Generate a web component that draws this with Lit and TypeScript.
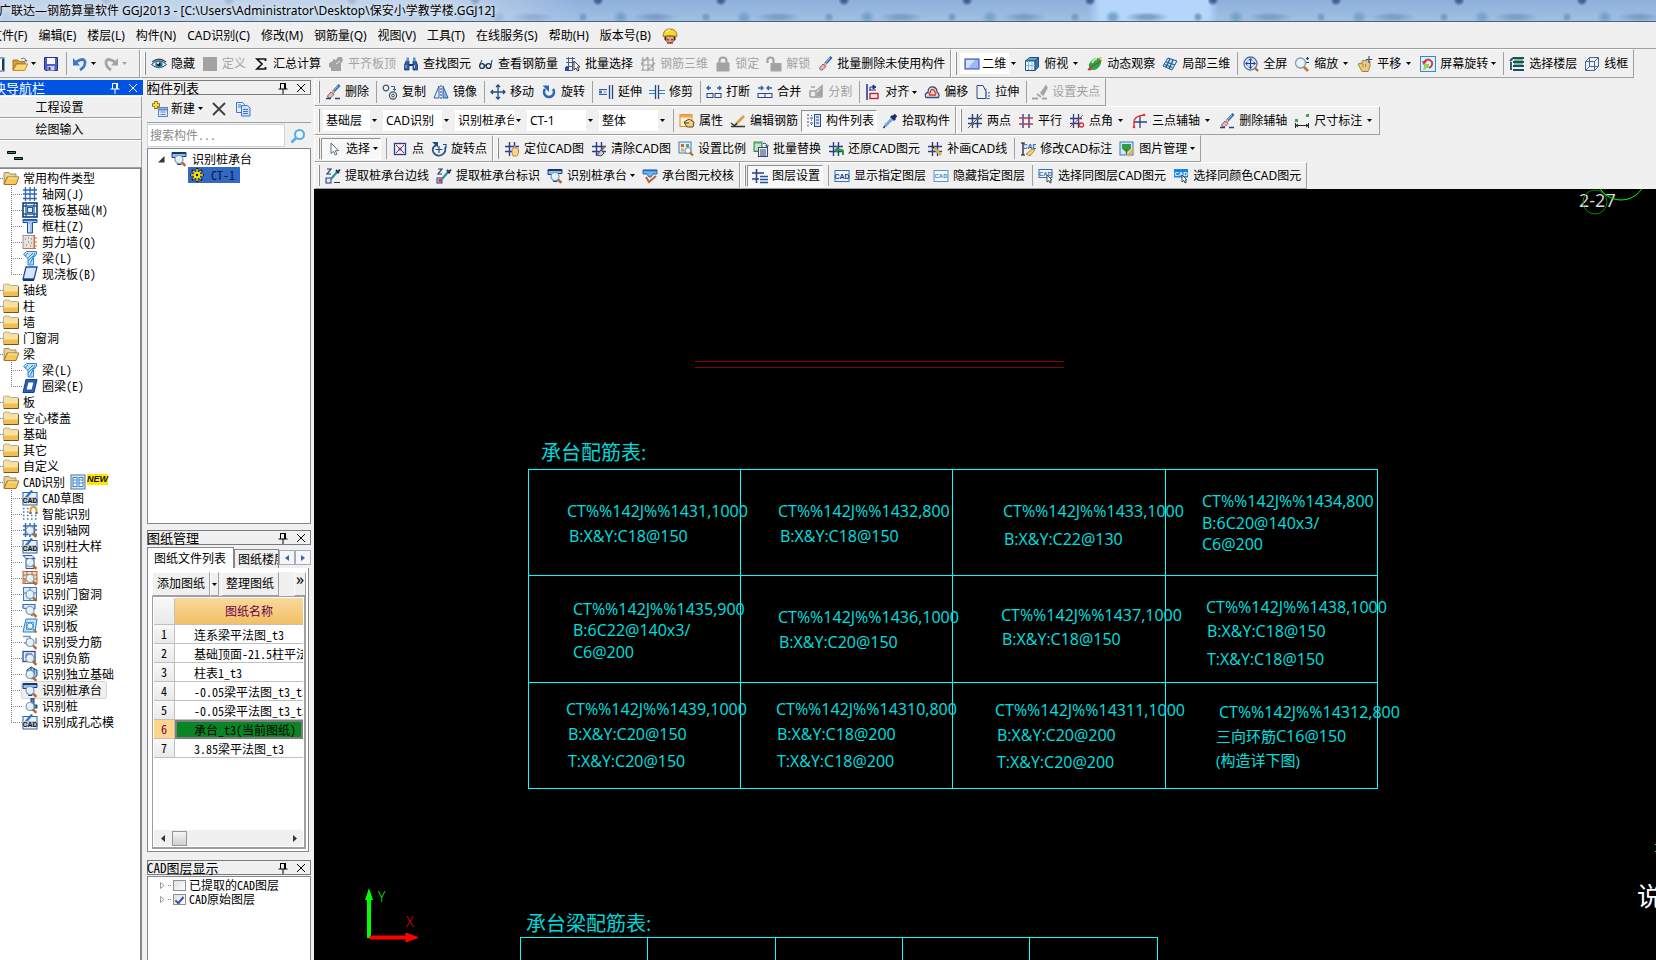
import { LitElement, html, svg, css, nothing, TemplateResult } from "lit";
import { customElement, property } from "lit/decorators.js";
import { classMap } from "lit/directives/class-map.js";

/* ---------- icon artwork, 16 x 16 ---------- */

const BLUE = "#3a76cf";
const GREY = "#a3a3a3";

const lens = svg`<circle cx="8" cy="8.5" r="4" fill="#dff1fc" stroke="#8797a8" stroke-width="1.2"/><path d="M6 7.5a2.4 2.4 0 0 1 2.4-1.6" stroke="#fff" fill="none"/><path d="M11.2 11.6l3.2 3.2" stroke="#b56b23" stroke-width="2.6"/>`;
const hash = svg`<path d="M5.5 1v14M10.5 1v14M1 5.5h14M1 10.5h14" stroke="#2a3f8c" stroke-width="1.4" fill="none"/>`;
const brush = svg`<path d="M14.5 1L8 8" stroke="#2d62b5" stroke-width="2.6"/><path d="M13 2L9 6.500" stroke="#9fd0f5" stroke-width="1"/><path d="M9.500 6L6 8.500l2.500 2.500z" fill="#f3c04b"/><path d="M6 8L2.500 12c0 2 2.500 2.500 3.500 1.500L9 10.500z" fill="#e9b9c4" stroke="#7a3b55" stroke-width=".8"/>`;
const tile = (inner: TemplateResult) => svg`<rect x="1.500" y="1.500" width="13" height="13" fill="#d9ebfb" stroke="${BLUE}"/>${inner}`;
const cad = svg`<text x="8" y="11" font-size="7" font-weight="700" text-anchor="middle" font-family="Liberation Sans, sans-serif" fill="#15407f">CAD</text>`;
const cadSheet = svg`<rect x="1" y="2.500" width="14" height="12.500" fill="#e6f1fb" stroke="#2f62a8"/><path d="M3 7L9 0l2 1-5 6z" fill="#2f6fd0"/><rect x="1" y="7" width="14" height="6" fill="#b8c4d0"/><text x="8" y="13" font-size="7" font-weight="700" text-anchor="middle" font-family="Liberation Sans, sans-serif" fill="#111">CAD</text>`;
const cap = svg`<path d="M1 1.500h14v4h-4l-1 8H6.500L5 6.500H1z" fill="#8fbdec" stroke="#12407f"/><path d="M1 2h14" stroke="#0e3b78" stroke-width="2"/>`;
const pick = (end: TemplateResult) => svg`<rect x="1" y="10" width="5" height="5" fill="#e8e8f4" stroke="#23356f"/><path d="M2 1h4L2 6h4" stroke="#23356f" stroke-width="1.200" fill="none"/><path d="M6 11L12 4" stroke="#2f8fa8" stroke-width="2.200"/><path d="M11 2l3 3M12 5l3-3.500" stroke="#1c2f60" stroke-width="1.800"/>${end}`;

const ICONS: Record<string, TemplateResult> = {
  newdoc: svg`<rect x="2" y="2" width="13" height="13" fill="#fff" stroke="#27508a"/><path d="M14 3v11" stroke="#123a5c" stroke-width="2"/>`,
  open: svg`<path d="M1 4h5l1.500 1.500H13V8H4l-3 6z" fill="#d9a235" stroke="#8f6516" stroke-width=".8"/><path d="M4.500 8H16l-3.500 6.500H1z" fill="#fbd774" stroke="#a8781d" stroke-width=".8"/><path d="M9 3q3-2.500 5 1" stroke="#4d6fae" fill="none"/><path d="M12.500 4h3l-1 2z" fill="#4d6fae"/>`,
  save: svg`<path d="M1.500 1.500h13v13h-12l-1-1z" fill="#4a5fc9" stroke="#27348f"/><rect x="4" y="2" width="8" height="6" fill="#f4f7ff"/><rect x="4.500" y="10" width="7" height="4.500" fill="#cdd5f3"/><rect x="5.500" y="11" width="2" height="3" fill="#27348f"/>`,
  undo: svg`<path d="M4 6q8-5 9 0 .5 4.500-5 8" stroke="#3c78cf" stroke-width="2.800" fill="none"/><path d="M1 2v7.500h7z" fill="#3c78cf"/>`,
  redo: svg`<path d="M12 6q-8-5-9 0-.5 4.500 5 8" stroke="${GREY}" stroke-width="2.800" fill="none"/><path d="M15 2v7.500H8z" fill="${GREY}"/>`,
  eye: svg`<path d="M.5 8.500Q8 1 15.500 8.500 8 15 .5 8.500z" fill="#e9f1f7" stroke="#2d3e52"/><path d="M1 6Q8 .500 15 6" stroke="#35506b" stroke-width="1.400" fill="none"/><circle cx="8" cy="8.500" r="3.800" fill="#3f83a9"/><circle cx="8" cy="8.500" r="1.800" fill="#0d1c2b"/><circle cx="7" cy="7" r="1" fill="#fff"/>`,
  block: svg`<rect x="1" y="1" width="14" height="14" fill="${GREY}"/>`,
  sigma: svg`<path d="M12.500 5V3H4l5 5-5 5h8.500v-2" stroke="#111" stroke-width="1.700" fill="none"/>`,
  flush: svg`<path d="M1 7l4-2V3l3 1 2-3h4l1 4-2 2v8H3v-3l-2-1z" fill="${GREY}"/><path d="M8 8l4-3" stroke="#eee"/>`,
  find: svg`<path d="M3 5h3v9H1.500V9zM10 5h3l1.500 4v5H10z" fill="#2e5ea8" stroke="#173868" stroke-width=".8"/><rect x="3.500" y="1.500" width="2.500" height="4" fill="#5c8ed4"/><rect x="10" y="1.500" width="2.500" height="4" fill="#5c8ed4"/><path d="M6 8h4v2H6z" fill="#173868"/><path d="M3 9v3M11.500 9v3" stroke="#a9c8f1"/>`,
  glasses: svg`<circle cx="4" cy="10" r="2.400" fill="none" stroke="#1c3857" stroke-width="1.400"/><circle cx="10.500" cy="10" r="2.400" fill="none" stroke="#1c3857" stroke-width="1.400"/><path d="M6.200 9.500q1-1 2 0M2 8l2-4M13 9l1-5" stroke="#1c3857" fill="none"/>`,
  batchsel: svg`<path d="M1 2.500h9M1 6.500h8M1 10.500h7M1 14.500h6M3.500 1v14M7.500 1v14" stroke="#4c5d86" fill="none"/><rect x="0" y="11" width="4" height="4" fill="#2a4fa8"/><path d="M9 5v9l2-2 1.500 3 1.500-.8L12.500 11H15z" fill="#fff" stroke="#334"/>`,
  rebar3d: svg`<path d="M1 4h13M1 9h13M1 14h13M3 1v14M8 1v14M13 1v14M1 8l7-7M7 15l8-8" stroke="${GREY}" stroke-width="1.200" fill="none"/>`,
  lock: svg`<path d="M4.500 7V4.500q0-3 3.500-3t3.500 3V7" stroke="${GREY}" stroke-width="2.200" fill="none"/><rect x="1.500" y="6.500" width="13" height="9" fill="${GREY}"/>`,
  unlock: svg`<path d="M1.500 7V4.500q0-3 3-3t3 3V8" stroke="${GREY}" stroke-width="2.200" fill="none"/><rect x="4.500" y="7" width="11" height="8.500" fill="${GREY}"/>`,
  brush,
  erase: svg`${brush}<path d="M1 14.500h5M10 14.500h5" stroke="#23457f" stroke-width="1.600"/>`,
  rect2d: svg`<rect x="1" y="3" width="14" height="10" fill="#9db9f3" stroke="#2749b0"/><path d="M2 4h9l-7 8H2z" fill="#d6e2fc"/>`,
  cube: svg`<path d="M1.500 5l4-3.500h9l-3.500 3.500z" fill="#5aa3dd" stroke="#1d4f80"/><path d="M1.500 5h9.500v9.500H1.500z" fill="#eef6fd" stroke="#1d4f80"/><path d="M11 5l3.500-3.500v9.500L11 14.500z" fill="#3376b4" stroke="#1d4f80"/><path d="M4.500 5v9M8 5v9M1.500 9.500H11" stroke="#8ab3d8" fill="none"/>`,
  orbit: svg`<ellipse cx="8" cy="8" rx="7" ry="5" transform="rotate(-45 8 8)" fill="#2ba34b"/><path d="M5 7q2-4 5-4" stroke="#b7f0b0" stroke-width="2" fill="none"/><path d="M1 14Q4 10 9 8t5-4" stroke="#8a5323" stroke-width="1.300" fill="none"/><path d="M12 1l3 0-1 4z" fill="#e6ce2e"/><circle cx="3" cy="13" r="1.500" fill="#d33"/>`,
  local3d: svg`<path d="M1 10l5-8 9 3-5 9z" fill="#cfe6f8" stroke="#24598f"/><path d="M4 6l9 3M2.500 8.500l8 3M8 3L4 11M11 4l-4 9" stroke="#24598f" stroke-width="1.300" fill="none"/>`,
  full: svg`<circle cx="7.500" cy="7.500" r="6.500" fill="#cfe2f7" stroke="#5b6f9c" stroke-width="1.300"/><path d="M7.500 3v9M3 7.500h9M6 4.500l1.500-2 1.500 2M6 10.500l1.500 2 1.500-2M4.500 6l-2 1.500 2 1.500M10.500 6l2 1.500-2 1.500" stroke="#1f3f86" fill="none"/><path d="M12 12l3 3" stroke="#b56b23" stroke-width="2.400"/>`,
  zoom: svg`<circle cx="6.500" cy="7" r="5" fill="#e6f3fd" stroke="#8b99ab" stroke-width="1.300"/><path d="M10 11l4 4" stroke="#c27a2b" stroke-width="2.600"/><path d="M13.500 1v3M12 2.500h3M12 6.500h3" stroke="#1f3f86" stroke-width="1.200"/>`,
  hand: svg`<path d="M1 8l2-1 2 1V5l2-1 1 1 2-.5 1 1 2 0v5l-2 5H5z" fill="#e9c886" stroke="#9c7635" stroke-width=".9"/><path d="M12 0v7M8.800 3.500h6.500" stroke="#344a70" stroke-width="1.100"/><path d="M6 8v3M8.500 8v3" stroke="#b68c45"/>`,
  rotscreen: svg`<rect x=".5" y=".5" width="15" height="15" fill="#d8f0fb" stroke="#2f8fc4"/><path d="M4 6q4-5 8 0 1 4-3 6" stroke="#e0322e" stroke-width="1.800" fill="none"/><path d="M2 5l5 .5L3.500 9z" fill="#e0322e"/><rect x="4" y="8" width="5" height="4" fill="#8fcf6c"/><rect x="3" y="12" width="3" height="2" fill="#f2c531"/>`,
  floors: svg`<path d="M4 2h11M1 5l3-3M4 6h11M4 10h11M4 14h11M2 6v8" stroke="#1c4f63" stroke-width="1.800" fill="none"/><path d="M5 4h9M5 8h9" stroke="#55b46a" stroke-width="1.500"/>`,
  wire: svg`<path d="M1.500 5.500h9v9h-9zM5.500 1.500h9v9h-9zM1.500 5.500l4-4M10.500 5.500l4-4M10.500 14.500l4-4M1.500 14.500l4-4" stroke="#4a6494" fill="none"/>`,

  copy: svg`<circle cx="4" cy="4" r="2.800" fill="none" stroke="#456" stroke-width="1.200"/><circle cx="11" cy="11.500" r="3.600" fill="#e4e8f0" stroke="#456" stroke-width="1.200"/><circle cx="11" cy="11.500" r="1.400" fill="none" stroke="#456"/><path d="M9 2.500h3.500V6M11 5l1.500 1.500L14 5" stroke="#2b5fae" fill="none"/>`,
  mirror: svg`<path d="M6 2v12H1z" fill="#e2edfa" stroke="#2b5fae"/><path d="M10 2v12h5z" fill="#8cb6ea" stroke="#2b5fae"/><path d="M8 1v14" stroke="#223a66" stroke-dasharray="2 1"/>`,
  move: svg`<path d="M8 1v14M1 8h14M6 3l2-2 2 2M6 13l2 2 2-2M3 6L1 8l2 2M13 6l2 2-2 2" stroke="#234a86" stroke-width="1.300" fill="none"/>`,
  rotate: svg`<path d="M4 5A5 5 0 1 0 12 5" stroke="#2f64b8" stroke-width="2.600" fill="none"/><path d="M1.500 1.500H8V8z" fill="#2f64b8"/>`,
  extend: svg`<path d="M11.500 1v14M14.500 1v14" stroke="#234a86" stroke-width="1.300"/><path d="M1 5.500h8M1 10.500h8" stroke="#2b5fae"/><rect x="1" y="6.500" width="3" height="3" fill="#4e6fa5"/><rect x="5.500" y="6.500" width="3" height="3" fill="#aebfda"/>`,
  trim: svg`<path d="M6.500 1v14M9.500 1v14" stroke="#234a86" stroke-width="1.300"/><path d="M0 6.500h6M0 9.500h6M10 6.500h6M10 9.500h6" stroke="#2f8aa8"/>`,
  breakk: svg`<path d="M1 4h4M11 4h4M3 2L1 4l2 2M13 2l2 2-2 2" stroke="#2b5fae" stroke-width="1.300" fill="none"/><rect x="1" y="9.500" width="6" height="4" fill="none" stroke="#234a86"/><rect x="9" y="9.500" width="6" height="4" fill="none" stroke="#234a86"/>`,
  merge: svg`<path d="M1 4h5M10 4h5M4 2l2 2-2 2M12 2l-2 2 2 2" stroke="#2b5fae" stroke-width="1.300" fill="none"/><rect x="1" y="9.500" width="14" height="4" fill="none" stroke="#234a86"/><path d="M8 9v5" stroke="#234a86"/>`,
  split: svg`<path d="M2 13h12M2 13V7h6v6M8 7l6-5v11M3 3l4 0" stroke="${GREY}" stroke-width="1.600" fill="none"/><path d="M9 9l5-6v9H9z" fill="${GREY}"/>`,
  align: svg`<path d="M2 0v16" stroke="#1d2f9a" stroke-width="1.500"/><rect x="5" y="9.500" width="8" height="5" fill="none" stroke="#c2222f" stroke-width="1.400"/><path d="M5 6.500V3h4" stroke="#1d2f9a" fill="none"/><path d="M8 1l3 2-3 2zM4 6h7" stroke="#1d2f9a" fill="#1d2f9a"/>`,
  offset: svg`<path d="M2 13.500q-2-4 2-5 0-6 5-5.500 4 .5 4 5 3 2 1.500 5.500z" fill="#f0dfe2" stroke="#33507c" stroke-width="1.300"/><path d="M5.500 11q-1-2 1-2.500 0-3 2-3t2.500 3q1.500 1 .5 2.500z" fill="none" stroke="#d2392f" stroke-width="1.300"/>`,
  stretch: svg`<path d="M2 1.500h6l3 6v7H2z" fill="none" stroke="#2a4c80"/><path d="M11 4.500v10M14 8v7M9 14.500h6" stroke="#2b5fae" stroke-dasharray="2 1" fill="none"/>`,
  clamp: svg`<path d="M9 9l5-7 1 2-4 7z" fill="${GREY}" stroke="${GREY}" stroke-width="1.500"/><path d="M0 14.500h6M10 14.500h5M5 10l4 3" stroke="${GREY}" stroke-width="1.800"/>`,

  props: svg`<rect x="1" y="1.500" width="12" height="12" fill="#fdf3d6" stroke="#e08a2d"/><rect x="1" y="1.500" width="12" height="3" fill="#f2a24d"/><path d="M5 9l5-3 5 3-1 5H8z" fill="#efcf7c" stroke="#5d4a1a"/><path d="M5 10h5" stroke="#5d4a1a"/>`,
  editbar: svg`<path d="M1 13.500h14M1 10l4 3" stroke="#333" stroke-width="1.400" fill="none"/><path d="M6 11L14 3" stroke="#d2a647" stroke-width="2.600"/><path d="M4.500 12.500L7 10.500" stroke="#222" stroke-width="1.600"/>`,
  complist: svg`<path d="M2 1v14M5 2.500h1M5 7h1M5 11.500h1" stroke="#334a7d" stroke-dasharray="2 1.500" fill="none"/><rect x="8.500" y="1.500" width="6" height="12" fill="#d8e4f6" stroke="#2c4e8d"/><path d="M10 4h3M10 7h3M10 10h3" stroke="#2c4e8d"/><path d="M4 5h3M4 10h3" stroke="#334a7d"/>`,
  dropper: svg`<path d="M9 3l4 4" stroke="#16305f" stroke-width="3"/><path d="M11.500 4.500L14 2" stroke="#16305f" stroke-width="3.600"/><path d="M10 6L3 13" stroke="#6fa7e3" stroke-width="3"/><path d="M3 13l-1.500 2" stroke="#16305f" stroke-width="1.400"/>`,
  twopt: svg`${hash}<path d="M1 15L15 1" stroke="#a8323a"/><circle cx="5.500" cy="10.500" r="1.600" fill="#28843a"/><circle cx="10.500" cy="5.500" r="1.600" fill="#28843a"/>`,
  parallel: svg`<path d="M5 1v14M11 1v14" stroke="#2a3f8c" stroke-width="1.400"/><path d="M1 5h14M1 11h14" stroke="#c23a42" stroke-width="1.400"/>`,
  ptangle: svg`<path d="M4.500 1v14M9.500 1v14M1 5.500h12M1 10.500h12" stroke="#2a3f8c" stroke-width="1.300"/><path d="M1 14L14 2" stroke="#d33"/><circle cx="12.500" cy="12" r="2" fill="#fff" stroke="#d33" stroke-width="1.400"/>`,
  threept: svg`<path d="M8 3v12M2 9h13" stroke="#2a3f8c" stroke-width="1.300"/><path d="M2 14V9q0-6 10-7" stroke="#d33" stroke-width="1.400" fill="none"/><circle cx="2" cy="14" r="1.300" fill="#d33"/><circle cx="12" cy="2" r="1.300" fill="#d33"/>`,
  dimension: svg`<rect x="1" y="6" width="3" height="3" fill="#3fa64c"/><rect x="12" y="1" width="3" height="3" fill="#3fa64c"/><path d="M1.500 10v5M14.500 10v5M2 12.500h12M4 11l-2 1.500L4 14M12 11l2 1.500-2 1.500" stroke="#222" fill="none"/>`,

  cursor: svg`<path d="M5 2v10.500l2.500-2.200L9.200 14l1.700-.8L9.300 9.700h3.200z" fill="#fff" stroke="#5a6a8a"/>`,
  point: svg`<rect x="2.500" y="2.500" width="11" height="11" fill="#eef1fa" stroke="#2a3f8c" stroke-width="1.300"/><path d="M4 4l8 8M12 4l-8 8" stroke="#8d2f4a"/><circle cx="8" cy="8" r="1.500" fill="#8d2f4a"/>`,
  rotpt: svg`<path d="M5 4q-5 3-2.500 7.500 3 4.500 8 2.500 5-2.500 3.500-8" stroke="#234a86" stroke-width="1.600" fill="none"/><path d="M1 1h6v5.500z" fill="#234a86"/><path d="M8 5v7M4.500 8.500h7M12 3.500h3V7" stroke="#234a86" stroke-width="1.200" fill="none"/>`,
  locate: svg`${hash}<path d="M8 8l2-1v-2h1.500v2l3 1v4l-1.500 3H9l-1-3z" fill="#f6d68e" stroke="#a5792b" stroke-width=".8"/>`,
  clear: svg`${hash}<path d="M14 5l-4 5" stroke="#8a6a40" stroke-width="1.800"/><path d="M10 9l3 3-3 3-4-1z" fill="#c9cfe0" stroke="#445"/>`,
  scale: svg`<rect x="1" y="1" width="12" height="11" fill="#dff0fb" stroke="#3b82b9"/><rect x="3" y="3" width="3" height="3" fill="#e3564e"/><rect x="8" y="3" width="3" height="3" fill="#58a85a"/><rect x="3" y="7.500" width="3" height="3" fill="#e7ae32"/><circle cx="10" cy="9.500" r="3" fill="#eef7fd" stroke="#75879b"/><path d="M12 11.500l3 3" stroke="#b56b23" stroke-width="2.200"/>`,
  replace: svg`<rect x="1" y="1" width="8" height="9.500" fill="#8ac495" stroke="#3c8c50"/><path d="M3 3v6M5 3v6M7 3v6" stroke="#fff"/><rect x="5.500" y="6.500" width="9" height="9" fill="#e8ecf4" stroke="#34476f"/><path d="M8 8v7M10 8v7M12 8v7" stroke="#34476f"/><path d="M10 2.500q4-1 4 3M12.500 4l1.500 2 1.500-2" stroke="#34476f" fill="none"/>`,
  restore: svg`${hash}<path d="M15 14V10q-1-2-6-1.500" stroke="#2d9a3b" stroke-width="2" fill="none"/><path d="M10 5.500v6.500L6 9z" fill="#2d9a3b"/>`,
  drawline: svg`${hash}<path d="M6 6l8 8" stroke="#d9b24c" stroke-width="2.600"/><path d="M5 5l2 2" stroke="#222" stroke-width="1.600"/>`,
  editcad: svg`<path d="M1 2h4M1 14h4M3 2v12" stroke="#111" stroke-width="1.200"/><text x="10" y="8" font-size="7" font-weight="700" text-anchor="middle" font-family="Liberation Sans, sans-serif" fill="#2667b4">CAD</text><path d="M6 13l6-5 3 1-5 6z" fill="#f4cf73" stroke="#9c7423" stroke-width=".8"/>`,
  picture: svg`<rect x="1" y="1" width="13" height="13" fill="#cfe8fa" stroke="#3b76b5"/><path d="M3 3h9v4.500l-3 3H6l-3-3z" fill="#2f9b44"/><path d="M7.500 8v5" stroke="#7a5024" stroke-width="1.400"/><path d="M9 15l5.500-7" stroke="#e2b14a" stroke-width="2.800"/>`,

  pickedge: pick(svg`<path d="M9 14.500h6" stroke="#23356f"/>`),
  pickmark: pick(svg`<circle cx="4" cy="12.500" r="1.700" fill="#d33"/>`),
  recogcap: svg`${cap}${lens}`,
  checkcap: svg`<path d="M1 2h14v4h-4l-2 3H7L5 6H1z" fill="#6fb3ee" stroke="#2a6bb0"/><path d="M1 2.500h14" stroke="#2a6bb0" stroke-width="1.500"/><path d="M4 9l3 5 7-6" stroke="#b2622d" stroke-width="2" fill="none"/>`,
  layerset: svg`<path d="M4.500 1v14M0 5h12M0 11h7" stroke="#2a3f8c" stroke-width="1.500"/><path d="M8 8.500h8M8 11.500h8M8 14.500h8" stroke="#23549c" stroke-width="1.500"/>`,
  cadshow: svg`<rect x="1" y="2.500" width="14" height="11" fill="#eef6ff" stroke="#2e6fc0"/>${cad}`,
  cadhide: svg`<rect x="1" y="2.500" width="14" height="11" fill="#eef6ff" stroke="#5d97c4"/><text x="8" y="10" font-size="6" font-weight="700" text-anchor="middle" font-family="Liberation Sans, sans-serif" fill="#4a87b8">CAD</text>`,
  cadlayer: svg`<rect x="1" y="1.500" width="13" height="8" fill="#eef6ff" stroke="#2e6fc0"/><text x="7.500" y="8" font-size="6" font-weight="700" text-anchor="middle" font-family="Liberation Sans, sans-serif" fill="#2e5f9f">CAD</text><path d="M9 7v7l1.800-1.500L12 15l1.300-.6-1.100-2.400H14z" fill="#fff" stroke="#445"/>`,
  cadcolor: svg`<rect x="1" y="1" width="14" height="8.500" fill="#1784e8"/><text x="8" y="7.500" font-size="6" font-weight="700" text-anchor="middle" font-family="Liberation Sans, sans-serif" fill="#fff">CAD</text><path d="M9 7v7l1.800-1.500L12 15l1.300-.6-1.100-2.400H14z" fill="#fff" stroke="#445"/>`,

  helmet: svg`<path d="M3 8h10v4q-5 6-10 0z" fill="#e0a67f" stroke="#6b3a24" stroke-width=".8"/><path d="M3.500 8v4M12.500 8v4" stroke="#4a2616" stroke-width="1.600"/><path d="M6 11v1.500M10 11v1.500" stroke="#222" stroke-width="1.300"/><path d="M5 15h6" stroke="#b23a35" stroke-width="1.500"/><path d="M1 8.500Q1 1 8 1t7 7.500q-7-2-14 0z" fill="#f9d435" stroke="#a97c0d"/><path d="M4 4q2-2 4-2" stroke="#fff3a8" stroke-width="1.300" fill="none"/>`,
  add: svg`<rect x="6.500" y="6.500" width="9" height="9" fill="#dbe9fb" stroke="#6184bd"/><path d="M6.500 8.500h9" stroke="#6184bd" stroke-width="2"/><path d="M8.500 11h5M8.500 13.500h5" stroke="#6184bd"/><path d="M4 0v8M0 4h8" stroke="#8c7310" stroke-width="3.600"/><path d="M4 1v6M1 4h6" stroke="#f4dc3a" stroke-width="2"/>`,
  remove: svg`<path d="M2 2l12 12M14 2L2 14" stroke="#3c4046" stroke-width="1.800"/>`,
  paste: svg`<path d="M1.500 1.500h6l2 2v8h-8z" fill="#e2effc" stroke="#3f77c4"/><path d="M6.500 4.500h6l2.500 2.500v8H6.500z" fill="#cfe2f8" stroke="#3f77c4"/><path d="M3 4h3M3 6h3M8 8.500h5M8 10.500h5M8 12.500h5" stroke="#3f77c4"/>`,
  search: svg`<circle cx="9.500" cy="6.500" r="4.500" fill="#eaf6fe" stroke="#5aaae6" stroke-width="2"/><path d="M6 10l-4.500 4.500" stroke="#5aaae6" stroke-width="2.600"/>`,
  pin: svg`<path d="M5 3.500h6M5.500 3v6M9.500 3v6M10.500 3v6M3.500 9h9M8 9v5" stroke="currentColor" fill="none"/>`,
  close: svg`<path d="M4 4l8 8M12 4l-8 8" stroke="currentColor" fill="none"/>`,
  gear: svg`<path d="M8 1v14M1 8h14M3 3l10 10M13 3L3 13" stroke="#222" stroke-width="2.600"/><path d="M8 2v12M2 8h12M4 4l8 8M12 4l-8 8" stroke="#f4e11c" stroke-width="1.400"/><circle cx="8" cy="8" r="3.300" fill="#f4e11c"/><circle cx="8" cy="8" r="1.300" fill="#222"/>`,

  folder: svg`<path d="M.5 4q0-2 1.500-2h4l1 1.500h8v11H.500z" fill="#efe0b4" stroke="#b3a173" stroke-width=".8"/><path d="M1 4.500h14v5H1z" fill="#f9e1a0"/><path d="M1 9.500h14v5H1z" fill="#efbf52"/><path d="M1 14.500h14.500V4.500" stroke="#6d5620" fill="none"/>`,
  folderopen: svg`<path d="M1 14V3.500q0-1 1-1h4l1 1.500h6V7" fill="#e8d59a" stroke="#a08c5c"/><path d="M4 7h12l-3 7.500H1z" fill="#f7c758" stroke="#8d6a20" stroke-width=".9"/><path d="M5 8h9.500" stroke="#fdeebb"/>`,
  axis: svg`<path d="M3.500 1v14M8 1v14M12.500 1v14M1 4h14M1 8h14M1 12.500h14" stroke="#3266b8" stroke-width="1.300"/>`,
  raft: svg`<rect x="1" y="1" width="14" height="14" fill="#fff" stroke="#123f74" stroke-width="1.600"/><path d="M4 1v14M12 1v14M1 4h14M1 12h14" stroke="#1d5a9a" stroke-width="1.300"/><rect x="5.500" y="5.500" width="5" height="5" fill="#dceafa" stroke="#1d5a9a"/>`,
  column: svg`<path d="M1 1.500h14v3h-4.500V15h-5V4.500H1z" fill="#9dc2f2" stroke="#1a4fb0"/><path d="M1 2h14" stroke="#1a4fb0" stroke-width="1.500"/><path d="M7 6v8" stroke="#e5f0fd" stroke-width="1.500"/>`,
  wall: svg`<rect x="1" y="1.500" width="11" height="13" fill="#e7e2de" stroke="#8a7f7a" stroke-width=".8"/><path d="M3 5h1M6 8h1M9 5h1M4 11h1M8 12h1M9 9h1M6 4h1" stroke="#666"/><path d="M12.500 1v14M1 14.500h13M12 4h3M12 8h3M12 12h3" stroke="#d6732b" stroke-width="1.200"/>`,
  beam: svg`<path d="M1.500 4.500l3-3h10v3l-3 3V15H6V8.500z" fill="#bfe0f8" stroke="#2c85cf"/><path d="M3 6l3-3M6 8l5-5M8 14l5-11M6 11l5-5" stroke="#2c85cf"/>`,
  slab: svg`<path d="M4 1h11l-3 12H1z" fill="#d6e5fa" stroke="#1a4fb0" stroke-width="1.300"/><path d="M1 14h11" stroke="#0f3580" stroke-width="2"/>`,
  ring: svg`<path d="M4 1.500h11l-3 13H1z" fill="#2a62c4" stroke="#123f8d"/><path d="M6 4h6l-2 8H4z" fill="#fff" stroke="#123f8d" stroke-width=".8"/>`,
  cadsheet: cadSheet,
  smart: svg`<path d="M1 2.500h6M1 6h6M1 9.500h14M1 13h14" stroke="#2f78c9" stroke-width="1.500" stroke-dasharray="1.500 2.500"/><path d="M8.500 8V4q0-3 3-3t3 3v4" stroke="#e09a2e" stroke-width="2" fill="none"/><path d="M7.500 7h2M13.500 7h2" stroke="#666" stroke-width="2"/>`,
  ragrid: svg`<path d="M3.500 1v14M8 1v14M12.500 1v14M1 4h14M1 8h14M1 12.500h14" stroke="#3266b8" stroke-width="1.400"/>${lens}`,
  racol: svg`<path d="M1 1.500h9l3 3H4zM4 4.500h8v10H4z" fill="#dfe8f6" stroke="#2f55a0"/>${lens}`,
  rawall: svg`<rect x="1" y="1.500" width="14" height="12" fill="#f5d9c8" stroke="#c0622c"/><path d="M1 5h14M1 9h14M5 1.500V5M10 1.500V5M3 9v4" stroke="#c0622c"/>${lens}`,
  radoor: svg`${tile(svg`<path d="M8 1.500v13M1.500 7h13" stroke="${BLUE}"/>`)}${lens}`,
  rabeam: svg`<path d="M1 2.500h12v4l-3 2v5l-4-3V7L1 6z" fill="#d5e8fa" stroke="#2f6bc4" stroke-width="1.200"/>${lens}`,
  raslab: svg`<path d="M4 1h11l-2 13H1z" fill="#c4e2f8" stroke="#2f7fc4"/><rect x="4.500" y="4.500" width="7" height="7" fill="#e9f6fe" stroke="#5ba0d8"/><circle cx="8" cy="8" r="3" fill="none" stroke="#4f95d0"/><path d="M12 12l2.500 2.500" stroke="#b56b23" stroke-width="2"/>`,
  raforce: svg`<path d="M1 2.500h7v3H4M8 2v8M2 9h9M14 4v6" stroke="#7d8fae" stroke-width="1.600" fill="none"/>${lens}`,
  raneg: svg`<rect x="1" y="1.500" width="12" height="10" fill="#eaf0fa" stroke="#284d9c" stroke-width="1.300"/><path d="M4 4h6M4 4v4M10 4v4" stroke="#284d9c" fill="none"/>${lens}`,
  rafound: svg`<path d="M5 4l4-3 6 3v6l-5 3-5-3z" fill="#9fc8ee" stroke="#174e86"/><path d="M9 1v6M12 3v6M6 4v6" stroke="#174e86"/>${lens}`,
  rapile: svg`<path d="M9 0h3v7h3v3h-3l-2 3-2-3H5V7h4z" fill="#4f85c6" stroke="#163f74"/>${lens}`,
  newgroup: svg`<rect x="1" y="1" width="14" height="14" fill="#d3e9fc" stroke="#56728e"/><rect x="3" y="3.500" width="4" height="9" fill="#fff" stroke="#3b82cf"/><rect x="9" y="3.500" width="4" height="9" fill="#fff" stroke="#3b82cf"/><path d="M3 6h4M9 6h4M3 9h4M9 9h4" stroke="#3b82cf"/>`,
};

const icon = (name: string) =>
  html`<svg class="ico" width="16" height="16" viewBox="0 0 16 16" aria-hidden="true">${ICONS[name]}</svg>`;

const caret = html`<svg class="caret" width="5" height="3" viewBox="0 0 5 3" aria-hidden="true"><path d="M0 0h5L2.500 3z" fill="currentColor" /></svg>`;

const sharedIcon = css`
  * { box-sizing: border-box; }
  svg { display: block; flex: none; }
  button, select, input {
    font: inherit;
    color: inherit;
    background: none;
    border: 0;
    border-radius: 0;
    margin: 0;
    padding: 0;
  }
  button { display: flex; align-items: center; white-space: nowrap; }
`;

/* ---------- toolbars ---------- */

interface Tool {
  kind?: "tool" | "sep" | "combo";
  icon?: string;
  label?: string;
  arrow?: "near" | "far";
  off?: boolean;
  down?: boolean;
  size?: "s" | "m" | "view";
}

const t = (ic: string, label = "", extra: Partial<Tool> = {}): Tool => ({ icon: ic, label, ...extra });
const c = (label: string, size: Tool["size"] = "m", ic?: string): Tool => ({ kind: "combo", label, size, icon: ic });
const sep: Tool = { kind: "sep" };
const off = { off: true };
const near = { arrow: "near" as const };
const far = { arrow: "far" as const };

const QUICK: Tool[] = [t("newdoc"), t("open", "", near), t("save"), sep, t("undo", "", near), t("redo", "", { ...near, off: true })];

const TOP: Tool[][] = [
  [
    t("eye", "隐藏"), t("block", "定义", off), t("sigma", "汇总计算"), t("flush", "平齐板顶", off),
    t("find", "查找图元"), t("glasses", "查看钢筋量"), t("batchsel", "批量选择"), t("rebar3d", "钢筋三维", off),
    t("lock", "锁定", off), t("unlock", "解锁", off), t("brush", "批量删除未使用构件"),
  ],
  [
    c("二维", "view", "rect2d"), t("cube", "俯视", far), t("orbit", "动态观察"), t("local3d", "局部三维"), sep,
    t("full", "全屏"), t("zoom", "缩放", far), t("hand", "平移", far), t("rotscreen", "屏幕旋转", near), sep,
    t("floors", "选择楼层"), t("wire", "线框"),
  ],
];

const ROWS: Tool[][][] = [
  [[
    t("erase", "删除"), sep, t("copy", "复制"), t("mirror", "镜像"), sep, t("move", "移动"), t("rotate", "旋转"), sep,
    t("extend", "延伸"), t("trim", "修剪"), sep, t("breakk", "打断"), t("merge", "合并"), t("split", "分割", off), sep,
    t("align", "对齐", near), t("offset", "偏移"), t("stretch", "拉伸"), sep, t("clamp", "设置夹点", off),
  ]],
  [
    [
      c("基础层", "s"), c("CAD识别"), c("识别桩承台"), c("CT-1"), c("整体"), sep,
      t("props", "属性"), t("editbar", "编辑钢筋"), t("complist", "构件列表", { down: true }), t("dropper", "拾取构件"),
    ],
    [
      t("twopt", "两点"), t("parallel", "平行"), t("ptangle", "点角", far), t("threept", "三点辅轴", far),
      t("erase", "删除辅轴"), t("dimension", "尺寸标注", far),
    ],
  ],
  [
    [t("cursor", "选择", { ...near, down: true }), sep, t("point", "点"), t("rotpt", "旋转点")],
    [
      t("locate", "定位CAD图"), t("clear", "清除CAD图"), t("scale", "设置比例"), t("replace", "批量替换"),
      t("restore", "还原CAD图元"), t("drawline", "补画CAD线"), sep, t("editcad", "修改CAD标注"), t("picture", "图片管理", near),
    ],
  ],
  [
    [t("pickedge", "提取桩承台边线"), t("pickmark", "提取桩承台标识"), t("recogcap", "识别桩承台", near), t("checkcap", "承台图元校核")],
    [
      t("layerset", "图层设置", { down: true }), sep, t("cadshow", "显示指定图层"), t("cadhide", "隐藏指定图层"), sep,
      t("cadlayer", "选择同图层CAD图元"), t("cadcolor", "选择同颜色CAD图元"),
    ],
  ],
];

@customElement("tool-band")
class ToolBand extends LitElement {
  @property({ attribute: false }) tools: Tool[] = [];

  static styles = [sharedIcon, css`
    :host {
      display: flex;
      align-items: center;
      flex: none;
      padding-right: 3px;
      border: 1px solid #a0a0a0;
      border-top-color: #fff;
      border-left-color: #fff;
    }
    .grip { width: 2px; align-self: stretch; margin: 2px 0 2px 3px; border-left: 1px solid #fff; border-right: 1px solid #8c8c8c; }
    .tool { height: 22px; padding: 0 2px 0 5px; gap: 4px; }
    .tool.off { color: #a3a3a3; }
    .tool.down {
      margin-left: 1px;
      background: #f8f8f8;
      border: 1px solid #fff;
      border-top-color: #8f8f8f;
      border-left-color: #8f8f8f;
      padding-left: 4px;
    }
    .caret { margin-left: -1px; }
    .far .caret { margin: 0 2px 0 1px; }
    .sep { width: 1px; align-self: stretch; margin: 2px 0 2px 5px; background: #a0a0a0; }
    .combo { display: flex; align-items: center; height: 21px; margin: 0 1px 0 3px; padding-left: 3px; background: #fff; width: 68px; }
    .combo.s { width: 56px; }
    .combo.view { width: 58px; }
    .combo .ico { margin: 0 2px 0 1px; }
    .combo select { flex: 1; min-width: 0; appearance: none; overflow: hidden; white-space: nowrap; text-overflow: clip; }
    .drop { align-self: stretch; flex: none; width: 9px; display: grid; place-items: center; background: #f0f0f0; }
    .combo .caret { margin: 0; }
  `];

  private item(x: Tool) {
    if (x.kind === "sep") return html`<span class="sep"></span>`;
    if (x.kind === "combo")
      return html`<label class="combo ${x.size}">
        ${x.icon ? icon(x.icon) : nothing}
        <select aria-label=${x.label!}><option>${x.label}</option></select>
        <span class="drop">${caret}</span>
      </label>`;
    return html`<button
      class=${classMap({ tool: true, off: !!x.off, down: !!x.down, far: x.arrow === "far" })}
      ?disabled=${!!x.off}
      aria-label=${x.label || x.icon!}
    >${icon(x.icon!)}${x.label ? html`<span>${x.label}</span>` : nothing}${x.arrow ? caret : nothing}</button>`;
  }

  render() {
    return html`<span class="grip"></span>${this.tools.map((x) => this.item(x))}`;
  }
}

/* ---------- dock panels ---------- */

@customElement("dock-title")
class DockTitle extends LitElement {
  @property() label = "";
  @property({ type: Boolean, reflect: true }) active = false;

  static styles = [sharedIcon, css`
    :host {
      display: flex;
      align-items: center;
      flex: none;
      height: 15px;
      border: 1px solid #7a7a7a;
      color: #000;
      font-size: 13px;
      line-height: 13px;
    }
    :host([active]) { background: #0054e3; border-color: #0054e3; color: #fff; }
    h2 { margin: 0 0 0 -1px; flex: 1; font: inherit; white-space: nowrap; }
    :host([active]) h2 { margin-left: -8px; }
    button { margin-right: 1px; margin-left: 1px; }
  `];

  render() {
    return html`<h2>${this.label}</h2>
      <button aria-label="固定">${icon("pin")}</button>
      <button aria-label="关闭">${icon("close")}</button>`;
  }
}

interface Node { icon: string; label: string; kids?: Node[]; selected?: boolean; fresh?: boolean }
const n = (ic: string, label: string): Node => ({ icon: ic, label });
const f = (label: string, kids?: Node[]): Node => ({ icon: kids ? "folderopen" : "folder", label, kids });

const NAV: Node[] = [
  f("常用构件类型", [
    n("axis", "轴网(J)"), n("raft", "筏板基础(M)"), n("column", "框柱(Z)"),
    n("wall", "剪力墙(Q)"), n("beam", "梁(L)"), n("slab", "现浇板(B)"),
  ]),
  f("轴线"), f("柱"), f("墙"), f("门窗洞"),
  f("梁", [n("beam", "梁(L)"), n("ring", "圈梁(E)")]),
  f("板"), f("空心楼盖"), f("基础"), f("其它"), f("自定义"),
  {
    ...f("CAD识别", [
      n("cadsheet", "CAD草图"), n("smart", "智能识别"), n("ragrid", "识别轴网"), n("cadsheet", "识别柱大样"),
      n("racol", "识别柱"), n("rawall", "识别墙"), n("radoor", "识别门窗洞"), n("rabeam", "识别梁"),
      n("raslab", "识别板"), n("raforce", "识别受力筋"), n("raneg", "识别负筋"), n("rafound", "识别独立基础"),
      { ...n("recogcap", "识别桩承台"), selected: true }, n("rapile", "识别桩"), n("cadsheet", "识别成孔芯模"),
    ]),
    fresh: true,
  },
];

@customElement("nav-tree")
class NavTree extends LitElement {
  static styles = [sharedIcon, css`
    :host { display: block; padding-top: 1px; overflow: hidden; }
    ul { list-style: none; margin: 0; padding: 0; }
    ul ul { padding-left: 11px; }
    li > .row { display: flex; align-items: center; height: 16px; }
    .link {
      width: 3px;
      height: 16px;
      flex: none;
      background: repeating-linear-gradient(90deg, #808080 0 1px, transparent 1px 2px) 0 8px / 100% 1px no-repeat;
    }
    ul ul .link {
      width: 11px;
      background:
        repeating-linear-gradient(90deg, #808080 0 1px, transparent 1px 2px) 0 8px / 100% 1px no-repeat,
        repeating-linear-gradient(#808080 0 1px, transparent 1px 2px) 0 0 / 1px 100% no-repeat;
    }
    ul ul li:last-child .link {
      background:
        repeating-linear-gradient(90deg, #808080 0 1px, transparent 1px 2px) 0 8px / 100% 1px no-repeat,
        repeating-linear-gradient(#808080 0 1px, transparent 1px 2px) 0 0 / 1px 9px no-repeat;
    }
    button { height: 16px; gap: 4px; line-height: 16px; padding-right: 4px; }
    .selected { background: #f0f0f0; border-radius: 2px; box-shadow: 0 0 0 1px #d6d6d6; }
    .fresh { margin-left: 1px; }
    .new { align-self: flex-start; margin-left: 1px; font: italic 700 9px/11px "Liberation Sans", sans-serif; background: #ffe600; color: #111; }
  `];

  private branch(nodes: Node[]): TemplateResult {
    return html`<ul>${nodes.map((x) => html`<li>
      <div class="row">
        <span class="link"></span>
        <button class=${classMap({ selected: !!x.selected })}>${icon(x.icon)}<span>${x.label}</span></button>
        ${x.fresh ? html`<span class="fresh">${icon("newgroup")}</span><span class="new">NEW</span>` : nothing}
      </div>
      ${x.kids ? this.branch(x.kids) : nothing}
    </li>`)}</ul>`;
  }

  render() { return this.branch(NAV); }
}

const DRAWINGS = [
  "连系梁平法图_t3", "基础顶面-21.5柱平法图", "柱表1_t3", "-0.05梁平法图_t3_t3",
  "-0.05梁平法图_t3_t3", "承台_t3(当前图纸)", "3.85梁平法图_t3",
];
const CURRENT = 5;

/* ---------- drawing canvas ---------- */

type Note = [number, number, string];

const NOTES: Note[] = [
  [253, 328, "CT%%142J%%1431,1000"], [255, 353, "B:X&Y:C18@150"],
  [464, 328, "CT%%142J%%1432,800"], [466, 353, "B:X&Y:C18@150"],
  [689, 328, "CT%%142J%%1433,1000"], [690, 356, "B:X&Y:C22@130"],
  [888, 318, "CT%%142J%%1434,800"], [888, 340, "B:6C20@140x3/"], [888, 361, "C6@200"],
  [259, 426, "CT%%142J%%1435,900"], [259, 447, "B:6C22@140x3/"], [259, 469, "C6@200"],
  [464, 434, "CT%%142J%%1436,1000"], [465, 459, "B:X&Y:C20@150"],
  [687, 432, "CT%%142J%%1437,1000"], [688, 456, "B:X&Y:C18@150"],
  [892, 424, "CT%%142J%%1438,1000"], [893, 448, "B:X&Y:C18@150"], [893, 476, "T:X&Y:C18@150"],
  [252, 526, "CT%%142J%%1439,1000"], [254, 551, "B:X&Y:C20@150"], [254, 578, "T:X&Y:C20@150"],
  [462, 526, "CT%%142J%%14310,800"], [463, 551, "B:X&Y:C18@200"], [463, 578, "T:X&Y:C18@200"],
  [681, 527, "CT%%142J%%14311,1000"], [683, 552, "B:X&Y:C20@200"], [683, 579, "T:X&Y:C20@200"],
  [905, 529, "CT%%142J%%14312,800"],
];

const COLS = [214, 426, 638, 851, 1063];
const LINES = [280, 386, 493, 599];
const BEAM_COLS = [206, 333, 461, 588, 715, 843];

@customElement("cad-canvas")
class CadCanvas extends LitElement {
  static styles = css`
    :host { display: block; background: #000; overflow: hidden; }
    svg { display: block; width: 100%; height: 100%; }
    .cyan { stroke: #00ffff; fill: none; shape-rendering: crispEdges; }
    text { font-family: "Open Sans", "Noto Sans CJK SC", sans-serif; font-weight: 400; }
    .note { font-size: 16px; fill: #00e0e0; }
    .cjk { font-size: 15px; fill: #00e0e0; }
    .head { font-size: 20px; fill: #00d8d8; }
    .white { font-size: 18px; fill: #dcdcdc; }
    .big { font-size: 26px; fill: #fff; }
    .red { stroke: #8b0000; fill: none; shape-rendering: crispEdges; }
    .axis { font-family: "Open Sans", sans-serif; font-size: 14px; font-weight: 300; }
    .gtext { fill: #00ff00; }
    .rtext { fill: #ff0000; }
  `;

  render() {
    return html`<svg role="img" aria-label="CAD图">
      <path class="red" d="M381 172.500H750M381 178.500H750" />
      <text class="white" x="1265" y="18">2-27</text>
      <circle cx="1281" cy="13" r="12" fill="none" stroke="#0a8a0a" />
      <circle cx="1307" cy="-14" r="25" fill="none" stroke="#00ff00" />
      <path class="cyan" d=${
        LINES.map((y) => `M${COLS[0]} ${y + 0.5}H${COLS[4] + 1}`).join("") +
        COLS.map((x) => `M${x + 0.5} ${LINES[0]}V${LINES[3] + 1}`).join("")
      } />
      <text class="head" x="227" y="271">承台配筋表:</text>
      ${NOTES.map(([x, y, s]) => svg`<text class="note" x=${x} y=${y}>${s}</text>`)}
      <text class="cjk" x="902" y="553">三向环筋<tspan class="note">C16@150</tspan></text>
      <text class="cjk" x="902" y="577">(构造详下图)</text>
      <text class="head" x="212" y="742">承台梁配筋表:</text>
      <path class="cyan" d=${
        `M${BEAM_COLS[0]} 748.500H${BEAM_COLS[5] + 1}` + BEAM_COLS.map((x) => `M${x + 0.5} 748V1200`).join("")
      } />
      <path d="M53 749V711h-2L55 699l4 12H57v38z" fill="#00ff00" />
      <path d="M56 747H92v-3l12 4.500L92 753v-3H56z" fill="#ff0000" stroke="#ff0000" />
      <text class="axis gtext" x="64" y="713">Y</text>
      <text class="axis rtext" x="92" y="738">X</text>
      <path d="M1341 655.500h2M1341 662.500h2" stroke="#00ff00" />
      <text class="big" x="1323" y="717">说明</text>
    </svg>`;
  }
}

/* ---------- application ---------- */

const MENU = [
  "文件(F)", "编辑(E)", "楼层(L)", "构件(N)", "CAD识别(C)", "修改(M)", "钢筋量(Q)",
  "视图(V)", "工具(T)", "在线服务(S)", "帮助(H)", "版本号(B)",
];

@customElement("app-root")
class AppRoot extends LitElement {
  static styles = [sharedIcon, css`
    :host {
      display: flex;
      flex-direction: column;
      height: 100vh;
      overflow: hidden;
      background: #f0f0f0;
      color: #000;
      font-family: "Noto Sans", "Noto Sans CJK SC", sans-serif;
      font-size: 12px;
      line-height: 16px;
    }
    .title {
      flex: none;
      height: 22px;
      border-bottom: 1px solid #4c6280;
      overflow: hidden;
      background:
        linear-gradient(90deg, rgba(214, 226, 240, .7) 0 440px, rgba(200, 218, 238, 0) 580px),
        radial-gradient(circle at 5px 0, #3f5f92 0 2px, transparent 6px) 101px 0 / 123px 21px repeat-x,
        radial-gradient(ellipse 8px 7px at 28px 17px, #76a4cd 30%, transparent) 101px 0 / 123px 21px repeat-x,
        radial-gradient(ellipse 22px 5px at 62px 17px, #7f9fc8 30%, transparent) 101px 0 / 123px 21px repeat-x,
        radial-gradient(ellipse 5px 5px at 113px 17px, #7a9ac4 30%, transparent) 101px 0 / 123px 21px repeat-x,
        linear-gradient(90deg, transparent 1088px, #b4d6fb 1100px 1208px, transparent 1218px),
        linear-gradient(#8db0db, #a0bfe3);
    }
    h1 { margin: 0 0 0 -1px; font: inherit; line-height: 21px; white-space: pre; text-shadow: 0 0 6px #fff; }
    .menu { display: flex; align-items: center; flex: none; height: 27px; gap: 11px; margin-left: -10px; padding-top: 2px; border-bottom: 1px solid #a0a0a0; }
    .menu button { height: 20px; }
    .row { display: flex; flex: none; height: 28px; }
    .row.tall { height: 29px; }
    .row.slim { height: 27px; }
    .quick { margin-left: -22px; padding-right: 10px; }
    .work { display: flex; flex: 1; min-height: 0; }
    .right { display: flex; flex-direction: column; flex: 1; min-width: 0; }
    cad-canvas { flex: 1; min-height: 0; }

    .dock {
      display: flex;
      flex-direction: column;
      flex: none;
      padding-top: 2px;
      font-family: "Noto Sans Mono CJK SC", "Noto Sans CJK SC", monospace;
    }
    .nav { width: 143px; }
    .nav dock-title { margin-bottom: 1px; }
    .wide { flex: none; justify-content: center; height: 22px; padding-right: 22px; margin-right: 1px; border: 1px solid #a0a0a0; border-top-color: #fff; border-left: 0; }
    .strip { flex: none; height: 28px; margin-right: 1px; padding: 10px 7px; border: 1px solid #a0a0a0; border-top-color: #fff; border-left: 0; }
    .nav nav-tree { flex: 1; min-height: 0; margin-right: 1px; background: #fff; border: 2px solid #84878f; border-width: 1px 2px 0 0; }

    .side { width: 164px; margin: 0 3px 0 4px; }
    .panel { display: flex; flex-direction: column; min-height: 0; }
    .list { flex: 445 1 0; margin-bottom: 6px; }
    .sheets { flex: 322 1 0; margin-bottom: 8px; }
    .layers { flex: 100 1 0; }
    .mini { display: flex; align-items: center; flex: none; height: 28px; padding-left: 5px; gap: 8px; border-bottom: 1px solid #a0a0a0; font-family: "Noto Sans", "Noto Sans CJK SC", sans-serif; }
    .mini button { gap: 3px; }
    .find { display: flex; align-items: center; flex: none; height: 25px; gap: 5px; padding-right: 5px; }
    .find input { flex: 1; min-width: 0; height: 23px; padding: 0 2px 3px; background: #fff; border: 1px solid #d0d4da; color: #333; }
    .find input::placeholder { color: #8a8a8a; opacity: 1; }
    .box { flex: 1; min-height: 0; background: #fff; border: 1px solid #828790; overflow: hidden; }
    .croot { height: 16px; margin-top: 2px; padding-left: 10px; gap: 5px; }
    .croot .tri { margin-right: 1px; }
    .cleaf { height: 16px; margin-left: 40px; padding: 0 5px 0 1px; gap: 6px; background: #316ac5; color: #10103a; }

    .tabs { display: flex; align-items: flex-end; flex: none; height: 21px; margin-top: 2px; }
    .tab { height: 19px; border: 1px solid #828790; border-bottom: 0; padding: 0 3px; overflow: hidden; min-width: 0; }
    .tab.on { flex: none; height: 21px; padding: 0 7px 0 6px; background: #fff; }
    .tab.rest { flex: 1; }
    .step { flex: none; width: 16px; height: 15px; align-self: center; justify-content: center; border: 1px solid #a8acb4; background: #f4f6fa; color: #3a63a8; }
    .page { display: flex; flex-direction: column; flex: 1; min-height: 0; margin-right: 2px; padding: 4px 2px 2px 4px; background: #fff; border: 1px solid #828790; border-top: 0; }
    .acts { display: flex; flex: none; height: 24px; font-family: "Noto Sans", "Noto Sans CJK SC", sans-serif; background: #f0f0f0; }
    .acts button { border: 1px solid #a0a0a0; border-top-color: #fff; border-left-color: #fff; justify-content: center; }
    .acts .wideact { width: 58px; }
    .acts .dd { width: 9px; margin-right: 2px; }
    .acts .more { width: 12px; margin-left: auto; align-items: flex-start; font-size: 16px; line-height: 12px; }
    .grid { display: flex; flex-direction: column; flex: 1; min-height: 0; padding: 1px; border: 1px solid #a0a0a0; border-right-width: 2px; border-bottom-width: 2px; }
    .scroll { flex: 1; min-height: 0; overflow: hidden; }
    table { width: 100%; table-layout: fixed; border-collapse: separate; border-spacing: 0; }
    th, td { padding: 0; font-weight: 400; white-space: nowrap; overflow: hidden; border-bottom: 1px solid #c0c0c0; }
    th.no { width: 21px; height: 19px; text-align: center; background: linear-gradient(#f8f8f8, #e9e9e9); border-right: 1px solid #c0c0c0; }
    thead th { height: 27px; color: #6b0050; background: linear-gradient(#f9d99c, #f1c064); }
    thead th.no { height: 27px; }
    thead th.name { padding-left: 20px; }
    td { height: 19px; line-height: 17px; padding-left: 19px; }
    .current th { background: #ffd58c; color: #6b0050; }
    .current td { background: #0a8525; border: 2px solid #7d7d7d; line-height: 14px; padding-left: 17px; }
    .hbar { display: flex; align-items: center; flex: none; height: 16px; background: #f0f0f0; }
    .hbar button { width: 17px; height: 16px; justify-content: center; }
    .thumb { width: 15px; height: 15px; margin: 0 auto 0 1px; border: 1px solid #979797; background: linear-gradient(#f6f6f6, #cfcfcf); }

    .layers .box { margin-top: 1px; padding-top: 1px; border-bottom: 0; }
    .check { display: flex; align-items: center; height: 14px; padding-left: 12px; }
    .check i { width: 3px; height: 1px; margin: 0 2px 0 3px; background: repeating-linear-gradient(90deg, #808080 0 1px, transparent 1px 2px); }
    .check input { appearance: none; flex: none; width: 13px; height: 11px; margin-right: 3px; border: 1px solid #8e8f8f; background: linear-gradient(135deg, #dcdfe4, #fff); display: grid; place-items: center; }
    .check input:checked::after { content: ""; width: 3px; height: 7px; border: solid #3a55a0; border-width: 0 2px 2px 0; transform: rotate(40deg); }
  `];

  render() {
    return html`
      <header class="title"><h1>广联达—钢筋算量软件 GGJ2013 - [C:\\Users\\Administrator\\Desktop\\保安小学教学楼.GGJ12]</h1></header>
      <nav class="menu">${MENU.map((m) => html`<button>${m}</button>`)}<button aria-label="在线客服">${icon("helmet")}</button></nav>
      <div class="row tall">
        <tool-band class="quick" .tools=${QUICK}></tool-band>
        ${TOP.map((b) => html`<tool-band .tools=${b}></tool-band>`)}
      </div>
      <div class="work">
        <aside class="dock nav">
          <dock-title active label="块导航栏"></dock-title>
          <button class="wide">工程设置</button>
          <button class="wide">绘图输入</button>
          <div class="strip"><svg width="16" height="9" viewBox="0 0 16 9"><path d="M.5.500h8v2h-8zM7.500 6.500h8v2h-8z" fill="#0d9488" stroke="#000" /></svg></div>
          <nav-tree></nav-tree>
        </aside>
        <aside class="dock side">
          <section class="panel list">
            <dock-title label="构件列表"></dock-title>
            <div class="mini">
              <button>${icon("add")}<span>新建</span>${caret}</button>
              <button aria-label="删除">${icon("remove")}</button>
              <button aria-label="复制">${icon("paste")}</button>
            </div>
            <div class="find">
              <input type="search" aria-label="搜索构件" placeholder="搜索构件..." />
              <button aria-label="搜索">${icon("search")}</button>
            </div>
            <div class="box">
              <button class="croot"><svg class="tri" width="7" height="7" viewBox="0 0 7 7"><path d="M6.500 0v6.500H0z" fill="#333" /></svg>${icon("recogcap")}<span>识别桩承台</span></button>
              <button class="cleaf">${icon("gear")}<span>CT-1</span></button>
            </div>
          </section>
          <section class="panel sheets">
            <dock-title label="图纸管理"></dock-title>
            <div class="tabs">
              <button class="tab on">图纸文件列表</button>
              <button class="tab rest">图纸楼层对照表</button>
              <button class="step" aria-label="向左"><svg width="4" height="6" viewBox="0 0 4 6"><path d="M4 0v6L0 3z" fill="currentColor" /></svg></button>
              <button class="step" aria-label="向右"><svg width="4" height="6" viewBox="0 0 4 6"><path d="M0 0v6l4-3z" fill="currentColor" /></svg></button>
            </div>
            <div class="page">
              <div class="acts">
                <button class="wideact">添加图纸</button><button class="dd" aria-label="添加选项">${caret}</button>
                <button class="wideact">整理图纸</button>
                <button class="more">»</button>
              </div>
              <div class="grid">
                <div class="scroll">
                  <table>
                    <thead><tr><th class="no"></th><th class="name">图纸名称</th></tr></thead>
                    <tbody>${DRAWINGS.map((d, i) => html`<tr class=${classMap({ current: i === CURRENT })}>
                      <th class="no" scope="row">${i + 1}</th><td>${d}</td></tr>`)}</tbody>
                  </table>
                </div>
                <div class="hbar">
                  <button aria-label="向左滚动"><svg width="4" height="7" viewBox="0 0 4 7"><path d="M4 0v7L0 3.500z" fill="#333" /></svg></button>
                  <span class="thumb"></span>
                  <button aria-label="向右滚动"><svg width="4" height="7" viewBox="0 0 4 7"><path d="M0 0v7l4-3.500z" fill="#333" /></svg></button>
                </div>
              </div>
            </div>
          </section>
          <section class="panel layers">
            <dock-title label="CAD图层显示"></dock-title>
            <div class="box">
              ${["已提取的CAD图层", "CAD原始图层"].map((l, k) => html`<label class="check">
                <svg width="5" height="7" viewBox="0 0 5 7"><path d="M.5.500v6l3.500-3z" fill="#fff" stroke="#999" /></svg><i></i>
                <input type="checkbox" ?checked=${k === 1} /><span>${l}</span></label>`)}
            </div>
          </section>
        </aside>
        <main class="right">
          ${ROWS.map((bands, k) => html`<div class=${classMap({ row: true, tall: k === 1, slim: k > 1 })}>
            ${bands.map((b) => html`<tool-band .tools=${b}></tool-band>`)}</div>`)}
          <cad-canvas></cad-canvas>
        </main>
      </div>`;
  }
}
